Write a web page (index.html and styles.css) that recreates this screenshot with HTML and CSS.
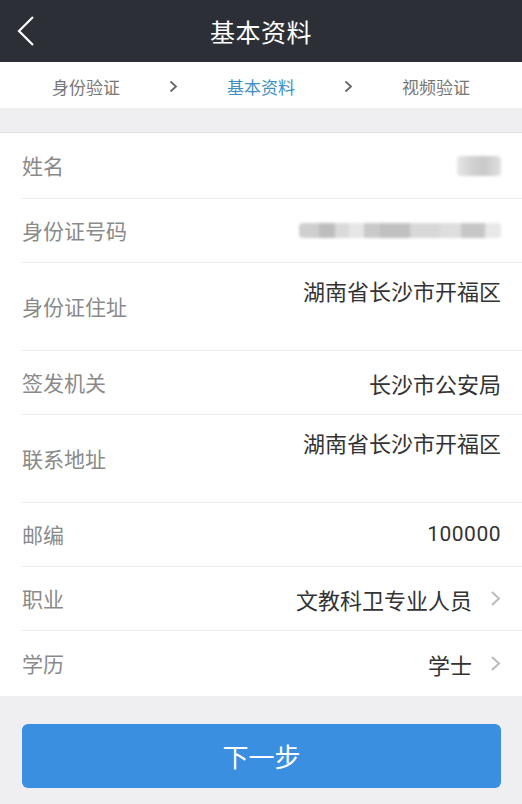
FILE: index.html
```html
<!DOCTYPE html>
<html lang="zh-CN">
<head>
<meta charset="utf-8">
<title>基本资料</title>
<link rel="stylesheet" href="styles.css">
</head>
<body>
<div class="app">
  <header class="topbar">
    <div class="back">
      <svg width="20" height="32" viewBox="0 0 20 32"><polyline points="17,2 3,16 17,30" fill="none" stroke="#fff" stroke-width="2.2"/></svg>
    </div>
    <h1 class="title">基本资料</h1>
    <div></div>
  </header>

  <nav class="steps">
    <span class="step">身份验证</span>
    <svg class="step-arrow" width="9" height="13" viewBox="0 0 9 13"><polyline points="1.5,1.5 7,6.5 1.5,11.5" fill="none" stroke="#666" stroke-width="1.8"/></svg>
    <span class="step active">基本资料</span>
    <svg class="step-arrow" width="9" height="13" viewBox="0 0 9 13"><polyline points="1.5,1.5 7,6.5 1.5,11.5" fill="none" stroke="#666" stroke-width="1.8"/></svg>
    <span class="step">视频验证</span>
  </nav>

  <div class="spacer"></div>

  <section class="list">
    <div class="row first">
      <span class="label">姓名</span>
      <span class="blur blur-name"></span>
    </div>
    <div class="row">
      <span class="label">身份证号码</span>
      <span class="blur blur-id"></span>
    </div>
    <div class="row tall">
      <span class="label">身份证住址</span>
      <span class="value top">湖南省长沙市开福区</span>
    </div>
    <div class="row">
      <span class="label">签发机关</span>
      <span class="value">长沙市公安局</span>
    </div>
    <div class="row tall">
      <span class="label">联系地址</span>
      <span class="value top">湖南省长沙市开福区</span>
    </div>
    <div class="row">
      <span class="label">邮编</span>
      <span class="value num">100000</span>
    </div>
    <div class="row">
      <span class="label">职业</span>
      <span class="value">文教科卫专业人员</span>
      <svg class="chev" width="11" height="17" viewBox="0 0 11 17"><polyline points="2,2 9,8.5 2,15" fill="none" stroke="#bbb" stroke-width="2"/></svg>
    </div>
    <div class="row last">
      <span class="label">学历</span>
      <span class="value">学士</span>
      <svg class="chev" width="11" height="17" viewBox="0 0 11 17"><polyline points="2,2 9,8.5 2,15" fill="none" stroke="#bbb" stroke-width="2"/></svg>
    </div>
  </section>

  <div class="actions">
    <button class="next">下一步</button>
  </div>
</div>
</body>
</html>
```

FILE: styles.css
```css
* { box-sizing: border-box; }
html, body { margin: 0; padding: 0; }
body {
  background: #efeff1;
  font-family: "Noto Sans CJK SC", "Noto Sans", "Liberation Sans", sans-serif;
}
.app { width: 522px; height: 804px; display: flex; flex-direction: column; overflow: hidden; }

.topbar {
  height: 62px;
  background: #2c2f36;
  display: grid;
  grid-template-columns: 60px 1fr 60px;
  align-items: center;
}
.back { display: flex; align-items: center; padding-left: 16px; height: 100%; }
.back svg { display: block; }
.title {
  margin: 0;
  text-align: center;
  color: #fff;
  font-size: 25px;
  font-weight: 400;
  line-height: 1;
  letter-spacing: 0.5px;
}

.steps {
  height: 46px;
  background: #fff;
  display: flex;
  align-items: center;
  justify-content: center;
  gap: 49px;
  padding-top: 2px;
}
.step { font-size: 17px; color: #777; line-height: 1; }
.step.active { color: #3d90c5; }
.step-arrow { display: block; }

.spacer { height: 25px; background: #efeff1; border-bottom: 1px solid #e2e2e4; }

.list { background: #fff; }
.row {
  height: 64px;
  margin-left: 22px;
  padding-right: 21px;
  display: flex;
  align-items: center;
  border-bottom: 1px solid #ececee;
}
.row.first { height: 66px; }
.row.tall { height: 88px; align-items: stretch; }
.row.last { border-bottom: none; height: 65px; }
.label {
  font-size: 21px;
  color: #8a8a8a;
  line-height: 1;
  flex: 1;
}
.row.tall .label { align-self: center; }
.value {
  font-size: 22px;
  color: #333;
  line-height: 1;
}
.value.top { padding-top: 16px; }
.value.num { font-family: "Roboto", "Noto Sans", sans-serif; font-size: 21px; letter-spacing: 0.5px; }
.chev { display: block; margin-left: 18px; }

.blur {
  display: block;
  filter: blur(1.5px);
  border-radius: 4px;
}
.blur-name {
  width: 44px;
  height: 20px;
  background: linear-gradient(90deg, #e6e6e6 0%, #d4d4d4 30%, #c8c8c8 60%, #e0e0e0 100%);
}
.blur-id {
  width: 202px;
  height: 15px;
  background: linear-gradient(90deg,
    #cfcfcf 0%, #cfcfcf 10%, #bdbdbd 10%, #bdbdbd 18%, #dadada 18%, #dadada 25%,
    #e6e6e6 25%, #e6e6e6 32%, #c9c9c9 32%, #c9c9c9 40%, #c0c0c0 40%, #c0c0c0 55%,
    #d8d8d8 55%, #d8d8d8 70%, #dedede 70%, #dedede 80%, #c7c7c7 80%, #c7c7c7 92%, #e8e8e8 92%);
}

.actions {
  flex: 1;
  padding: 28px 21px 0 22px;
  background: #efeff1;
}
.next {
  width: 479px;
  height: 64px;
  border: none;
  border-radius: 6px;
  background: #3b8fe0;
  color: #fff;
  font-family: "Noto Sans CJK SC", "Noto Sans", sans-serif;
  font-size: 26px;
  line-height: 1;
  display: block;
}
```
